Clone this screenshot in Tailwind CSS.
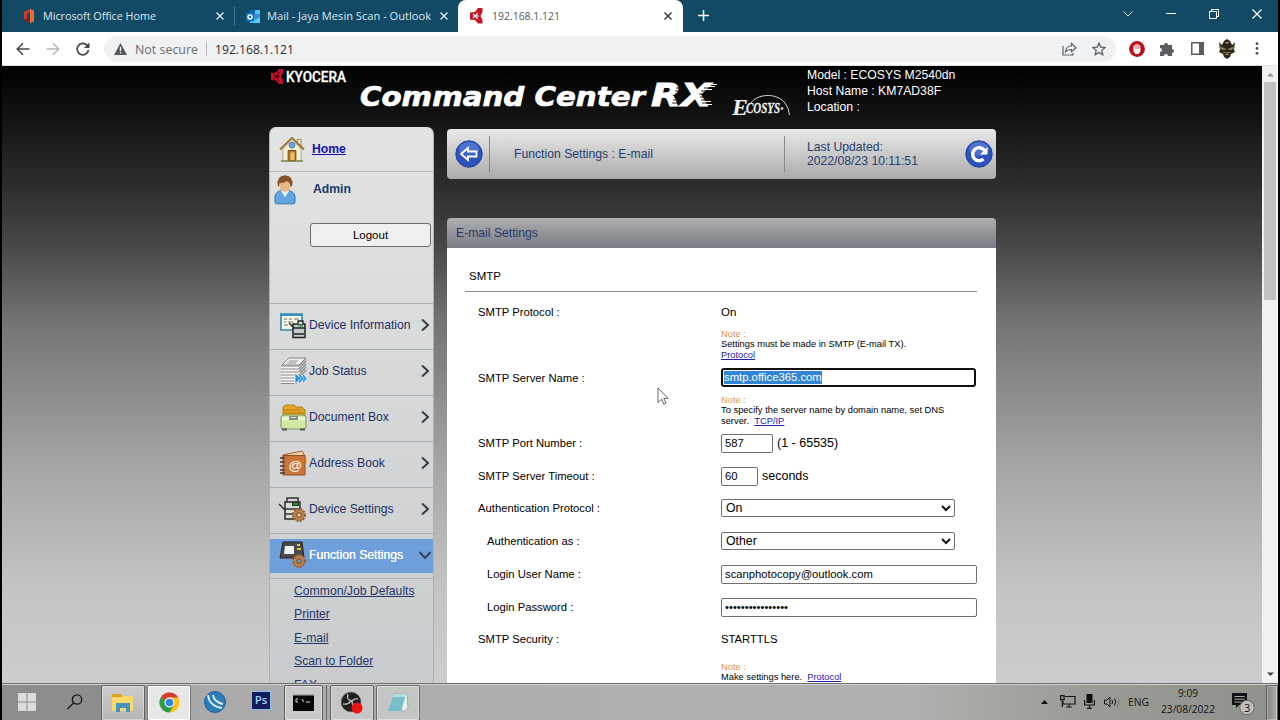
<!DOCTYPE html>
<html lang="en">
  <head>
    <meta charset="UTF-8" />
    <meta name="viewport" content="width=device-width, initial-scale=1.0" />
    <title>192.168.1.121</title>
    <script src="https://cdn.jsdelivr.net/npm/@tailwindcss/browser@4"></script>
  </head>
  <body class="w-[1280px] h-[720px] overflow-hidden bg-black flex flex-col font-['Liberation_Sans',sans-serif]">
    <!-- Browser tabs -->
    <header class="h-8 mx-[2px] shrink-0 bg-[#124a66] flex text-[11.5px] font-['Open_Sans',sans-serif] text-[#dbe7ee]">
      <div class="w-[232px] flex items-center pl-[19px]">
        <svg class="w-4 h-4 mr-[6px]" viewBox="0 0 16 16">
          <path d="M3 4l6-3v3L6 5.500v5L3 12z" fill="#c8402c" />
          <path d="M9 1l4 1.500v11L9 15z" fill="#ee6b35" />
          <path d="M3 12l2-1.500 4 1V15z" fill="#8c1f1d" />
        </svg>
        <svg class="w-[117px] h-6 overflow-visible" viewBox="0 0 117 24"><text x="0" y="16" textLength="113" lengthAdjust="spacingAndGlyphs" fill="#dbe7ee">Microsoft Office Home</text></svg>
        <svg class="w-2 h-2 ml-[56px]" viewBox="0 0 8 8" stroke="#e4edf2" stroke-width="1.300"><path d="M.5.500l7 7M7.500.500l-7 7" /></svg>
      </div>
      <div class="w-[226px] flex items-center">
        <div class="w-px h-[18px] bg-[#4b7890]"></div>
        <svg class="w-[15px] h-[15px] ml-[11px] mr-[6px]" viewBox="0 0 15 15">
          <path d="M4 1h10v12H4z" fill="#2e8fdc" />
          <path d="M4 1h5v4H4z" fill="#1569b5" />
          <path d="M9 1h5v4H9z" fill="#50c7f5" />
          <path d="M4 8l5 3 5-3v6H4z" fill="#58cdf7" />
          <path d="M0 3.500h8v9H0z" fill="#0f6cbd" />
          <circle cx="4" cy="8" r="2" fill="none" stroke="#fff" stroke-width="1.500" />
        </svg>
        <svg class="w-[168px] h-6 overflow-visible" viewBox="0 0 168 24"><text x="0" y="16" textLength="164" lengthAdjust="spacingAndGlyphs" fill="#dbe7ee">Mail - Jaya Mesin Scan - Outlook</text></svg>
        <svg class="w-2 h-2 ml-[5px]" viewBox="0 0 8 8" stroke="#e4edf2" stroke-width="1.300"><path d="M.5.500l7 7M7.500.500l-7 7" /></svg>
      </div>
      <div class="w-[225px] -ml-[2px] bg-white rounded-t-[8px] flex items-center pl-[12px]">
        <svg class="w-[14px] h-4 mr-[8px]" viewBox="0 0 14 16">
          <path d="M0 4.500L5 4l3-4h4.500v4L10.500 8l2 4v3.500H8L5 12 0 11.500z" fill="#c41422" />
          <path d="M3 6l2 2-2 2M7.500 5l-2 3 2 3M5 8h4" stroke="#fff" stroke-width="1.200" fill="none" />
        </svg>
        <svg class="w-[72px] h-6 overflow-visible" viewBox="0 0 72 24"><text x="0" y="16" textLength="68" lengthAdjust="spacingAndGlyphs" fill="#55595c">192.168.1.121</text></svg>
        <svg class="w-2 h-2 ml-[100px]" viewBox="0 0 8 8" stroke="#3c4043" stroke-width="1.500"><path d="M.5.500l7 7M7.500.500l-7 7" /></svg>
      </div>
      <svg class="w-[11px] h-[11px] mt-[10px] ml-[15px]" viewBox="0 0 11 11" stroke="#fff" stroke-width="1.500"><path d="M5.500 0v11M0 5.500h11" /></svg>
      <div class="ml-auto mr-[16px] h-[27px] flex items-center gap-[33px]">
        <svg class="w-[10px] h-[10px]" viewBox="0 0 10 10" fill="none" stroke="#d5e4ec"><path d="M.5 2.500L5 7l4.500-4.500" /></svg>
        <svg class="w-[10px] h-[10px]" viewBox="0 0 10 10" stroke="#fff"><path d="M0 4.500h10" /></svg>
        <svg class="w-[10px] h-[10px]" viewBox="0 0 10 10" fill="none" stroke="#fff"><path d="M.5 2.500h7v7h-7zM2.500 2.500v-2h7v7h-2" /></svg>
        <svg class="w-[10px] h-[10px]" viewBox="0 0 10 10" stroke="#fff" stroke-width="1.200"><path d="M.5.500l9 9M9.500.500l-9 9" /></svg>
      </div>
    </header>

    <!-- Address bar -->
    <nav class="h-[34px] mx-[2px] shrink-0 bg-white flex items-center border-b border-[#dfe1e3] text-[12px] font-['Open_Sans',sans-serif]">
      <svg class="w-[14px] h-[14px] ml-[14px]" viewBox="0 0 14 14" fill="none" stroke="#45494d" stroke-width="1.500"><path d="M13.500 7H1.500M7 1.200L1.200 7 7 12.800" /></svg>
      <svg class="w-[14px] h-[14px] ml-4" viewBox="0 0 14 14" fill="none" stroke="#b5b7b9" stroke-width="1.500"><path d="M.5 7h12M7 1.200L12.800 7 7 12.800" /></svg>
      <svg class="w-[14px] h-[14px] ml-4" viewBox="0 0 14 14" fill="none" stroke="#45494d" stroke-width="1.700"><path d="M12.500 8A5.700 5.700 0 1 1 11 3.200L12.500 4.700" /><path d="M13.500.500v5.500H8z" fill="#45494d" stroke="none" /></svg>
      <div class="w-[1012px] h-[26px] ml-[14px] rounded-full bg-[#eff1f2] flex items-center pl-[10px]">
        <svg class="w-[13px] h-3" viewBox="0 0 13 12"><path d="M6.500 0L13 12H0z" fill="#55585c" /><path d="M6.500 4v4M6.500 9v1.500" stroke="#fff" stroke-width="1.300" /></svg>
        <svg class="w-[66px] h-6 ml-[8px] overflow-visible" viewBox="0 0 66 24"><text x="0" y="16.500" textLength="63" lengthAdjust="spacingAndGlyphs" fill="#6a6d70">Not secure</text></svg>
        <div class="w-px h-[14px] ml-[5px] bg-[#b6b9bc]"></div>
        <svg class="w-[82px] h-6 ml-[8px] overflow-visible" viewBox="0 0 82 24"><text x="0" y="16.500" textLength="79" lengthAdjust="spacingAndGlyphs" fill="#2b2e31">192.168.1.121</text></svg>
        <svg class="w-[15px] h-[14px] ml-auto" viewBox="0 0 15 14" fill="none" stroke="#5f6368" stroke-width="1.200"><path d="M1 4v9h10v-2M3.500 10c.3-4 2.500-6 6-6V1.500L14 5.700l-4.500 4V7.500c-3 0-4.500.500-6 2.500z" /></svg>
        <svg class="w-[14px] h-[14px] ml-[15px] mr-[10px]" viewBox="0 0 14 14" fill="none" stroke="#55595d" stroke-width="1.200"><path d="M7 1l1.700 4.100 4.400.400-3.300 2.900 1 4.300L7 10.400l-3.800 2.300 1-4.300L.9 5.500l4.400-.4z" /></svg>
      </div>
      <svg class="w-4 h-4 ml-[13px]" viewBox="0 0 16 16">
        <circle cx="8" cy="8" r="7.900" fill="#c00d1c" />
        <path d="M5.200 8V5M7 7V3.500M8.900 7V3.700M10.700 9V5" stroke="#fff" stroke-width="1.300" stroke-linecap="round" />
        <path d="M4.600 7.500h6.700v3L9.500 13h-3L4.600 10.500z" fill="#fff" />
      </svg>
      <svg class="w-[14px] h-[14px] ml-[15px]" viewBox="0 0 14 14" fill="#5a5e62"><path d="M0 3h4a2 2 0 1 1 4-.2V3h4v4a2 2 0 1 1 0 4v3H8a2 2 0 1 0-4 0H0v-4a2 2 0 1 0 0-4z" /></svg>
      <svg class="w-[13px] h-[13px] ml-[17px]" viewBox="0 0 13 13"><path d="M.75.750h11.500v11.500H.75z" fill="#fff" stroke="#5a5e62" stroke-width="1.500" /><path d="M8 1h4.500v11H8z" fill="#5a5e62" /></svg>
      <svg class="w-[18px] h-[20px] ml-[14px]" viewBox="0 0 18 20">
        <path d="M1 3l3 3 2-4 3-2 3 2 2 4 3-3-1 8 1 2-4 2-1 3-3 2-3-2-1-3-4-2 1-2z" fill="#2a2719" />
        <path d="M3 8l5 2.500H4zM15 8l-5 2.500h4zM7 3l2 2 2-2M5 13.500h8M7 16l2-1.500 2 1.500M1.500 4l1 6M16.500 4l-1 6" stroke="#8c7c4b" stroke-width=".8" fill="#a39566" />
      </svg>
      <svg class="w-1 h-[13px] ml-[19px]" viewBox="0 0 4 13" fill="#4d5155"><circle cx="2" cy="1.700" r="1.400" /><circle cx="2" cy="6.500" r="1.400" /><circle cx="2" cy="11.300" r="1.400" /></svg>
    </nav>

    <!-- Page viewport -->
    <div class="h-[617px] mx-[2px] shrink-0 flex overflow-hidden">
      <div class="w-[1260px] pl-[267px] bg-[linear-gradient(180deg,#000_0%,#151515_9%,#2c2c2c_19%,#474747_29%,#757575_42%,#a6a6a6_65%,#c4c4c4_85%,#cdcdcd_100%)]">
        <div class="h-[61px] flex">
          <svg class="w-[78px] h-5 mt-px overflow-visible" viewBox="0 0 78 20">
            <path d="M2 6l5-.5L10 2h4v4l-2 3.500L14 13v4h-4l-3-3.500L2 13z" fill="#c4102f" />
            <path d="M4.500 7l3 2.500-3 2.500M10 5L7.500 9.500 10 14M8 9.500h3" stroke="#300" stroke-width="1" fill="none" />
            <text x="17" y="14.500" textLength="60" lengthAdjust="spacingAndGlyphs" font-family="Roboto, sans-serif" font-size="15.500" font-weight="500" fill="#fff" stroke="#fff" stroke-width=".3">KYOCERA</text>
          </svg>
          <svg class="w-[450px] h-[60px] ml-[11px]" viewBox="0 0 450 60">
            <text x="2" y="40" textLength="285" lengthAdjust="spacingAndGlyphs" font-family="DejaVu Sans, sans-serif" font-size="27" font-weight="700" font-style="italic" fill="#fff" stroke="#fff" stroke-width=".7">Command Center</text>
            <text x="293" y="40" textLength="60" lengthAdjust="spacingAndGlyphs" font-family="DejaVu Sans, sans-serif" font-size="32" font-weight="700" font-style="italic" fill="#fff" stroke="#fff" stroke-width=".9">RX</text>
            <path d="M318 22h9M317 25h9M317 28h8M316 31h8M315 34h8M314 37h8M346 22h13M343 25h13M341 28h10M342 31h10M343 34h12M344 37h12" stroke="#111" stroke-width=".9" />
            <path d="M350 18.500h9M348 20.500h9M346 23.500h8M345 35.500h8M346 38.500h8" stroke="#fff" stroke-width="1" />
            <path d="M393 37c6-9 25-11 34 0q4 5 4.500 12" fill="none" stroke="#d4d4d4" />
            <text x="374" y="48.500" font-family="Liberation Serif, serif" font-size="24" font-weight="700" font-style="italic" fill="#eee">E</text>
            <text x="388" y="47" textLength="34" lengthAdjust="spacingAndGlyphs" font-family="Liberation Serif, serif" font-size="15" font-weight="700" font-style="italic" fill="#eee" stroke="#eee" stroke-width=".3">COSYS</text>
            <circle cx="424" cy="42.500" r="1.400" fill="#ccc" />
          </svg>
          <div class="-ml-px pt-px text-[12.200px] leading-4 text-white">
            <p>Model : ECOSYS M2540dn</p>
            <p>Host Name : KM7AD38F</p>
            <p>Location :</p>
          </div>
        </div>

        <div class="flex gap-[13px]">
          <!-- Side menu -->
          <aside class="w-[165px] h-[620px] rounded-t-[7px] border-x border-[#b0b0b0] bg-linear-to-b from-[#e3e3e3] to-[#c6c9cb] text-[12.200px] text-[#1c3166]">
            <div class="h-[45px] flex items-center pl-[9px] border-b border-[#b9b9b9]">
              <svg class="w-[26px] h-[27px]" viewBox="0 0 27 27">
                <path d="M19 3h4v9h-4z" fill="#eee" stroke="#b48135" />
                <path d="M4 13L13.500 3 23 13v12.500H4z" fill="#f2efd4" stroke="#a8a58c" />
                <path d="M1 13.500L13.500 1.500 26 13.500" fill="none" stroke="#98702e" stroke-width="1.800" />
                <circle cx="13.500" cy="9" r="3" fill="#61a8e6" stroke="#537aa0" />
                <path d="M9.500 14.500h8v11h-8z" fill="#bd7624" stroke="#6f4b16" />
                <path d="M12 16.500h4v8h-4z" fill="#eac568" />
                <path d="M2 25.500h8M18 25.500h7" stroke="#788d50" stroke-width="1.500" />
              </svg>
              <a class="ml-[7px] text-[12.200px] font-bold underline text-[#1512b0]">Home</a>
            </div>
            <div class="h-[34px] flex items-center pl-[4px]">
              <svg class="w-[22px] h-[31px]" viewBox="0 0 23 32">
                <path d="M1 29v-6q1-5 7-6h7q6 1 7 6v6q0 2-2 2H3q-2 0-2-2z" fill="#62a5df" stroke="#3476ae" />
                <path d="M7 17l4.500 7 4.500-7z" fill="#e7f3fc" />
                <ellipse cx="11.500" cy="11.500" rx="6" ry="7" fill="#e9b985" />
                <path d="M4 12Q2 2 11.500 1 21 2 19 12l-2 1q0-5-4-6-3 3-7 2l-1 4z" fill="#875227" />
              </svg>
              <span class="ml-[17px] font-bold text-[12.200px] text-[#153a70]">Admin</span>
            </div>
            <button class="block w-[121px] h-[24px] mt-[17px] ml-[40px] mb-[56px] rounded-[3px] border border-[#6d6d6d] bg-[#efefef] text-[11.500px] leading-[22px] text-black">Logout</button>

            <div class="h-[46px] pb-[3px] flex items-center pl-[10px] pr-[4px] border-t border-[#acafb1]">
              <svg class="w-[27px] h-[27px]" viewBox="0 0 27 27">
                <path d="M1 3h21v15H1z" fill="#f5f8e9" stroke="#3288ac" stroke-width="1.600" />
                <path d="M0 2.500h23" stroke="#358fb4" stroke-width="2.500" />
                <path d="M4 7h3M9 7h3M14 7h5M4 10h2M8 10h5M4 13h4" stroke="#6c745d" stroke-width="1.200" />
                <path d="M13 12h12v13.500H13z" fill="#c8ccc8" stroke="#222" stroke-width="1.500" />
                <path d="M9 11l4 4M13 16h12M14 22h10M18 12V9h5v3" stroke="#222" fill="#ddd" stroke-width="1.300" />
                <path d="M18 14h5" stroke="#3ca844" stroke-width="1.500" />
              </svg>
              <span class="ml-[2px]">Device Information</span>
              <svg class="w-2 h-3 ml-auto" viewBox="0 0 8 12" fill="none" stroke="#393e46" stroke-width="2"><path d="M1 .5L7 6l-6 5.500" /></svg>
            </div>
            <div class="h-[46px] pb-[3px] flex items-center pl-[10px] pr-[4px] border-t border-[#acafb1]">
              <svg class="w-[27px] h-[28px]" viewBox="0 0 27 28">
                <path d="M9 1h17L19 8H2z" fill="#eee" stroke="#888" />
                <path d="M9 4h9M7 6h9" stroke="#999" />
                <path d="M1 9h18v17H1z" fill="#f5f5f5" />
                <path d="M1 9h18l7-8M1 12h18l7-8M1 15h18l7-8M1 18h18l7-8M1 21h18l7-8M1 24h18M1 26.500h16" fill="none" stroke="#8b8b8b" stroke-width="1.200" />
                <path d="M15 16l6 5.500-6 5.500zM19 16l5 5.500-5 5.500M23 16.500l4 5-4 5" fill="#2794e4" stroke="#e0f1fb" stroke-width=".8" />
              </svg>
              <span class="ml-[2px]">Job Status</span>
              <svg class="w-2 h-3 ml-auto" viewBox="0 0 8 12" fill="none" stroke="#393e46" stroke-width="2"><path d="M1 .5L7 6l-6 5.500" /></svg>
            </div>
            <div class="h-[46px] pb-[3px] flex items-center pl-[10px] pr-[4px] border-t border-[#acafb1]">
              <svg class="w-[27px] h-[28px]" viewBox="0 0 27 28">
                <path d="M3 13V4l3-2h8l2 2h6l3 3v7z" fill="#e2a326" stroke="#b17c15" />
                <path d="M3 7h18M4 10h20" stroke="#b77a0e" />
                <path d="M1 15q0-3 3-3h19q3 0 3 3v9q0 2-2 2H3q-2 0-2-2z" fill="#cfe9a2" stroke="#7f9565" />
                <path d="M2 14h23v3H2z" fill="#edf8d6" />
                <path d="M9 13h9v4H9z" fill="#878c7b" />
                <path d="M11 14.500h5" stroke="#ddd" /><path d="M2 26.500h5M20 26.500h5" stroke="#555" stroke-width="2" />
              </svg>
              <span class="ml-[2px]">Document Box</span>
              <svg class="w-2 h-3 ml-auto" viewBox="0 0 8 12" fill="none" stroke="#393e46" stroke-width="2"><path d="M1 .5L7 6l-6 5.500" /></svg>
            </div>
            <div class="h-[46px] pb-[3px] flex items-center pl-[10px] pr-[4px] border-t border-[#acafb1]">
              <svg class="w-[27px] h-[27px]" viewBox="0 0 27 27">
                <path d="M3 5l19-4 3 5v4H3z" fill="#f0d1a8" stroke="#a35d33" />
                <path d="M24 8h3v5h-3z" fill="#efb54a" />
                <path d="M3 5.500h22V25H3z" fill="#ca763a" stroke="#965026" />
                <path d="M0 8h5M0 12h5M0 16h5M0 20h5M0 23h5" stroke="#4a3430" stroke-width="1.400" />
                <text x="8.500" y="20" font-size="13.500" fill="#fff">@</text>
              </svg>
              <span class="ml-[2px]">Address Book</span>
              <svg class="w-2 h-3 ml-auto" viewBox="0 0 8 12" fill="none" stroke="#393e46" stroke-width="2"><path d="M1 .5L7 6l-6 5.500" /></svg>
            </div>
            <div class="h-[46px] pb-[3px] flex items-center pl-[8px] pr-[4px] border-t border-[#acafb1]">
              <svg class="w-[29px] h-[27px]" viewBox="0 0 29 27">
                <path d="M7 6h15v17H7z" fill="#d9dcd9" stroke="#292929" stroke-width="1.500" />
                <path d="M1 8l6 6M9 6V2h11v4M7 13h15M7 18h15" fill="none" stroke="#333" stroke-width="1.500" />
                <path d="M14 6h7v4h-7z" fill="#173d1b" /><path d="M15 8h5" stroke="#54d65c" />
                <circle cx="21" cy="19" r="6" fill="#bc824c" stroke="#98602d" stroke-width="2" stroke-dasharray="2 1.200" />
                <circle cx="21" cy="19" r="2.200" fill="#ead2a3" stroke="#6c451f" />
              </svg>
              <span class="ml-[2px]">Device Settings</span>
              <svg class="w-2 h-3 ml-auto" viewBox="0 0 8 12" fill="none" stroke="#393e46" stroke-width="2"><path d="M1 .5L7 6l-6 5.500" /></svg>
            </div>
            <div class="h-[46px] pt-[5px] pb-[6px] border-y border-[#acafb1]">
              <div class="h-[34px] pb-[2px] bg-[#6f9fdb] flex items-center pl-[9px] pr-[2px] text-white">
                <svg class="w-[28px] h-[28px]" viewBox="0 0 28 28">
                  <path d="M4 1h19l2 16H1z" fill="#4a4b48" stroke="#222" />
                  <path d="M6 5h9v8H5z" fill="#eef0f5" />
                  <path d="M18 4h3M18 8h4" stroke="#e2c543" stroke-width="2" />
                  <circle cx="20" cy="20" r="6" fill="#bc824c" stroke="#98602d" stroke-width="2" stroke-dasharray="2 1.200" />
                  <circle cx="20" cy="20" r="2.200" fill="#6da0bd" stroke="#6c451f" />
                </svg>
                <span class="ml-[2px] [text-shadow:0_0_0.5px_#fff]">Function Settings</span>
                <svg class="w-3 h-2 ml-auto" viewBox="0 0 12 8" fill="none" stroke="#39475c" stroke-width="2"><path d="M.5 1L6 7l5.500-6" /></svg>
              </div>
            </div>
            <ul class="pt-px pl-[24px] leading-[23.400px] underline text-[#24366c]">
              <li><a>Common/Job Defaults</a></li>
              <li><a>Printer</a></li>
              <li><a>E-mail</a></li>
              <li><a>Scan to Folder</a></li>
              <li><a>FAX</a></li>
            </ul>
          </aside>

          <main class="w-[549px] text-[11.250px] text-black">
            <div class="h-[50px] mt-[2px] rounded-[4px] bg-linear-to-b from-[#e9e9e9] to-[#ababab] flex items-center text-[12.200px] text-[#25406f]">
              <svg class="w-[28px] h-[28px] ml-[8px]" viewBox="0 0 28 28">
                <circle cx="14" cy="14" r="13.200" fill="#2b52bd" stroke="#253f91" />
                <ellipse cx="14" cy="9" rx="10" ry="7" fill="#6688dd" opacity=".6" />
                <path d="M6 14l7-6v3.500h8.500v5H13V20z" fill="#3c63c8" stroke="#fff" stroke-width="1.800" />
              </svg>
              <div class="w-px h-9 ml-[6px] bg-[#858585]"></div>
              <span class="ml-[24px]">Function Settings : E-mail</span>
              <div class="w-px h-9 ml-auto bg-[#8a8a8a]"></div>
              <p class="w-[158px] ml-[22px] leading-[14px]">Last Updated:<br />2022/08/23 10:11:51</p>
              <svg class="w-[28px] h-[28px] mr-[3px]" viewBox="0 0 28 28">
                <circle cx="14" cy="14" r="13.200" fill="#2b52bd" stroke="#253f91" />
                <ellipse cx="14" cy="9" rx="10" ry="7" fill="#6688dd" opacity=".6" />
                <path d="M18.500 19a6.500 6.500 0 1 1 1-8.500" fill="none" stroke="#fff" stroke-width="3.400" />
                <path d="M22.500 7v7.500H15z" fill="#fff" />
              </svg>
            </div>
            <h2 class="h-[30px] mt-[39px] pl-[9px] rounded-t-[4px] bg-linear-to-b from-[#b0b0b1] to-[#777b83] text-[12.200px] leading-[30px] text-[#26396d]">E-mail Settings</h2>
            <section class="h-[440px] bg-white">
              <h3 class="h-[44px] ml-[18px] mr-[19px] pl-[4px] pt-[19px] border-b border-[#8e8e8e] text-[11.500px] leading-[18px]">SMTP</h3>
              <div class="grid grid-cols-[243px_1fr] pl-[31px] pt-[10px] leading-5">
                <div class="h-[66px]">SMTP Protocol :</div>
                <div>
                  <p class="text-[11.500px]">On</p>
                  <div class="mt-[7px] text-[9.300px] leading-[10.300px]">
                    <p class="text-[#e2933d]">Note :</p>
                    <p>Settings must be made in SMTP (E-mail TX).</p>
                    <a class="block underline text-[#2420b0]">Protocol</a>
                  </div>
                </div>

                <div class="h-[65px]">SMTP Server Name :</div>
                <div>
                  <div class="w-[255px] h-[19px] border-2 border-[#101010] rounded-[3px] px-px flex items-center text-[11.300px] leading-[13px]"><span class="bg-[#3185d6] text-white">smtp.office365.com</span></div>
                  <div class="mt-[8px] text-[9.350px] leading-[10.300px]">
                    <p class="text-[#e2a03d]">Note :</p>
                    <p>To specify the server name by domain name, set DNS</p>
                    <p>server. &nbsp;<a class="underline text-[#2420b0]">TCP/IP</a></p>
                  </div>
                </div>

                <div class="h-[33px]">SMTP Port Number :</div>
                <div class="flex h-5 items-center gap-1 text-[12.500px]">
                  <span class="w-[52px] h-[19px] border border-[#6f6f6f] rounded-[2px] pl-[3px] text-[11.250px] leading-[17px]">587</span>
                  <span>(1 - 65535)</span>
                </div>

                <div class="h-[33px]">SMTP Server Timeout :</div>
                <div class="flex h-5 items-center gap-1 text-[12.500px]">
                  <span class="w-[37px] h-[19px] border border-[#6f6f6f] rounded-[2px] pl-[3px] text-[11.250px] leading-[17px]">60</span>
                  <span>seconds</span>
                </div>

                <div class="h-[33px] -mt-px">Authentication Protocol :</div>
                <div class="w-[234px] h-[18px] border border-[#6f6f6f] rounded-[2px] pl-[4px] pr-[3px] flex items-center justify-between text-[12.300px]">
                  On
                  <svg class="w-[10px] h-[7px]" viewBox="0 0 10 7" fill="none" stroke="#111" stroke-width="2"><path d="M1 1l4 4 4-4" /></svg>
                </div>

                <div class="h-[33px] pl-[9px]">Authentication as :</div>
                <div class="w-[234px] h-[18px] mt-px border border-[#6f6f6f] rounded-[2px] pl-[4px] pr-[3px] flex items-center justify-between text-[12.300px]">
                  Other
                  <svg class="w-[10px] h-[7px]" viewBox="0 0 10 7" fill="none" stroke="#111" stroke-width="2"><path d="M1 1l4 4 4-4" /></svg>
                </div>

                <div class="h-[33px] pl-[9px]">Login User Name :</div>
                <div class="w-[256px] h-[19px] mt-px border border-[#6f6f6f] rounded-[2px] pl-[3px] leading-[17px]">scanphotocopy@outlook.com</div>

                <div class="h-[32px] pl-[9px]">Login Password :</div>
                <div class="w-[256px] h-[19px] mt-px border border-[#6f6f6f] rounded-[2px] pl-[3px] leading-[17px]">••••••••••••••••</div>

                <div class="h-[33px]">SMTP Security :</div>
                <div>
                  <p class="text-[11.250px]">STARTTLS</p>
                  <div class="mt-[13px] text-[9.300px] leading-[10.300px]">
                    <p class="text-[#e2933d]">Note :</p>
                    <p>Make settings here. &nbsp;<a class="underline text-[#2420b0]">Protocol</a></p>
                  </div>
                </div>
              </div>
            </section>
          </main>
        </div>
      </div>

      <!-- Scrollbar -->
      <div class="w-4 bg-[#f1f1f1] flex flex-col items-center justify-between">
        <div class="w-[12px] h-[234px] flex flex-col items-center">
          <svg class="w-[7px] h-4 shrink-0" viewBox="0 0 7 16"><path d="M3.500 7L7 10.500H0z" fill="#8f8f8f" /></svg>
          <div class="w-[12px] h-[218px] bg-[#c1c1c1]"></div>
        </div>
        <svg class="w-[7px] h-[17px]" viewBox="0 0 7 17"><path d="M0 6.500h7L3.500 10z" fill="#444" /></svg>
      </div>
    </div>

    <!-- Taskbar -->
    <footer class="h-[37px] mx-[2px] shrink-0 border-t border-[#6f6f6f] bg-[linear-gradient(90deg,#8d8d8d_0,#8d8d8d_95px,#aaa_200px,#aeaeae_450px,#b1b1b0_900px,#9b9c96_1080px,#8f918b_1276px)]">
      <div class="h-9 pb-[2px] border-t border-[#d0d0d0] flex items-center text-[#111]">
        <svg class="w-[18px] h-[18px] ml-4" viewBox="0 0 18 18" fill="#dcdcdc"><path d="M0 0h8.500v8.500H0zM9.500 0H18v8.500H9.500zM0 9.500h8.500V18H0zM9.500 9.500H18V18H9.500z" /></svg>
        <svg class="w-4 h-4 ml-[31px]" viewBox="0 0 16 16" fill="none" stroke="#161616" stroke-width="1.300"><circle cx="10" cy="5.500" r="4.700" /><path d="M6.500 9L.5 15" /></svg>
        <div class="w-[44px] h-[36px] -mb-[2px] ml-[18px] rounded-[2px] border border-[#5e5e5e] bg-linear-to-b from-[#ccc] to-[#b5b5b5] inset-ring inset-ring-white/40 flex items-center justify-center">
          <svg class="w-[22px] h-5" viewBox="0 0 22 20"><path d="M0 1h9l2 2h10v15H0z" fill="#f7d96c" /><path d="M0 1h9l1.500 3H0z" fill="#d9a521" /><path d="M4 19V10h14v9h-4v-4H8v4z" fill="#4396c0" /></svg>
        </div>
        <div class="w-[44px] h-[36px] -mb-[2px] ml-[2px] rounded-[2px] border border-[#777] bg-[#e7e7e7] inset-ring inset-ring-white flex items-center justify-center">
          <svg class="w-[21px] h-[21px]" viewBox="0 0 22 22">
            <circle cx="11" cy="11" r="10.500" fill="#fbc116" />
            <path d="M11 11L1.900 5.750A10.500 10.500 0 0 1 20.100 5.750H11z" fill="#da3b2f" />
            <path d="M1.900 5.750A10.500 10.500 0 0 0 11 21.500l4.500-8-4.500-2.500z" fill="#2c9d4d" />
            <circle cx="11" cy="11" r="5.200" fill="#fff" /><circle cx="11" cy="11" r="4" fill="#357fe1" />
          </svg>
        </div>
        <svg class="w-[22px] h-[22px] ml-[13px]" viewBox="0 0 22 22"><circle cx="11" cy="11" r="10.500" fill="#2c7cba" stroke="#226397" /><path d="M4 4q1 11 14 13M9 4q1 7 10 9" stroke="#e2f2fc" stroke-width="1.800" fill="none" /></svg>
        <div class="w-5 h-[19px] -mt-[2px] ml-[25px] bg-[#101c5c] border border-[#8ebde8] text-center text-[11.500px] leading-[16px] font-semibold font-['Open_Sans',sans-serif] text-[#a5d5fb]">Ps</div>
        <div class="w-[39px] h-[36px] -mb-[2px] ml-[13px] rounded-[2px] border border-[#5e5e5e] bg-[#c9c9c9] inset-ring inset-ring-white/50 flex items-center justify-center">
          <svg class="w-[21px] h-[17px]" viewBox="0 0 21 17"><path d="M0 0h21v17H0z" fill="#080808" /><path d="M0 .5h21" stroke="#aaa" stroke-width="2" /><path d="M5 5H3v3h2M7 5v.1M7 8v.1M9 5l2 3M13 8h4" stroke="#ddd" fill="none" /></svg>
        </div>
        <div class="w-[4px] h-[36px] -mb-[2px] border-r border-[#666]"></div>
        <div class="w-[44px] h-[36px] -mb-[2px] ml-[3px] rounded-[2px] border border-[#5e5e5e] bg-[#c6c6c6] inset-ring inset-ring-white/40 flex items-center justify-center">
          <svg class="w-[22px] h-[23px]" viewBox="0 0 22 23">
            <circle cx="10" cy="11" r="9.800" fill="#211f20" stroke="#555" stroke-width=".7" />
            <path d="M7 3q-2 6 4 7M2 13q5 1 8-3M17 8q-5-1-6 3l2 7" fill="none" stroke="#bdbdbd" stroke-width="1.300" />
            <circle cx="16" cy="17" r="5.500" fill="#ee1313" />
          </svg>
        </div>
        <div class="w-[44px] h-[36px] -mb-[2px] ml-[2px] rounded-[2px] border border-[#6a6a6a] bg-[#c4c6c5] inset-ring inset-ring-white/40 flex items-center justify-center">
          <svg class="w-[22px] h-[20px]" viewBox="0 0 22 20"><path d="M7 1h13l1 14-5 4z" fill="#e9f0ef" stroke="#78908f" stroke-width=".6" /><path d="M7 1h12l-5 17H1z" fill="#75bfc9" /><path d="M7 1h12l-1 3H6z" fill="#b4e1e4" /></svg>
        </div>
        <svg class="w-[7px] h-1 ml-auto" viewBox="0 0 7 4"><path d="M0 4L3.500 0 7 4z" fill="#111" /></svg>
        <svg class="w-[16px] h-[13px] ml-[12px]" viewBox="0 0 16 13" fill="none" stroke="#151515" stroke-width="1.200"><path d="M5 1.500h10v7.500H3V6M9 9v3M6 12h6M.6.600h3.500v4H.6zM2.300 4.600V12" /></svg>
        <svg class="w-[11px] h-[15px] ml-[8px]" viewBox="0 0 11 15"><path d="M2.500 0h6v9h-6z" fill="#111" /><path d="M.6 6v5h9.800V6M5.500 11v3M3 14.400h5" fill="none" stroke="#111" stroke-width="1.200" /></svg>
        <svg class="w-4 h-3 ml-[9px]" viewBox="0 0 16 12" fill="none" stroke="#151515"><path d="M.5 4h2.500l3-3v10l-3-3H.5zM8 4q1.200 2 0 4M10.500 2.500q2.400 3.500 0 7" /><path d="M13 1q3.500 5 0 10" stroke="#777" /></svg>
        <svg class="w-[22px] h-6 ml-[8px] overflow-visible" viewBox="0 0 22 24"><text x="0" y="15.500" textLength="21" lengthAdjust="spacingAndGlyphs" font-family="Open Sans, sans-serif" font-size="11.500" fill="#111">ENG</text></svg>
        <svg class="w-[58px] h-[34px] ml-[10px] overflow-visible" viewBox="0 0 58 34" font-family="Open Sans, sans-serif" font-size="11.500" fill="#111"><text x="18" y="12" textLength="20" lengthAdjust="spacingAndGlyphs">9:09</text><text x="1" y="28" textLength="54" lengthAdjust="spacingAndGlyphs">23/08/2022</text></svg>
        <svg class="w-[23px] h-[23px] ml-[14px] mt-[3px]" viewBox="0 0 23 23"><path d="M0 1h15v12H7l-3 3v-3H0z" fill="#111" /><path d="M2.500 4.500h10M2.500 7.200h10M2.500 10h7" stroke="#aaa" /><circle cx="15" cy="15.500" r="7.200" fill="#bfc0bb" stroke="#686963" /><text x="12" y="19.500" font-family="Open Sans, sans-serif" font-size="11" fill="#111">3</text></svg>
        <div class="w-[12px] h-9 -mb-[2px] ml-[11px] border border-[#5d5f5a] bg-linear-to-r from-[#83857f] to-[#afb0ac] inset-ring inset-ring-white/30"></div>
      </div>
    </footer>

    <!-- Mouse pointer -->
    <svg class="absolute left-[657px] top-[387px] w-3 h-[18px]" viewBox="0 0 12 18"><path d="M1 1v14.500l3.500-3.300 2.300 5 2.200-1-2.200-4.800h4.200z" fill="#fff" stroke="#555" stroke-width=".9" /></svg>
  </body>
</html>
